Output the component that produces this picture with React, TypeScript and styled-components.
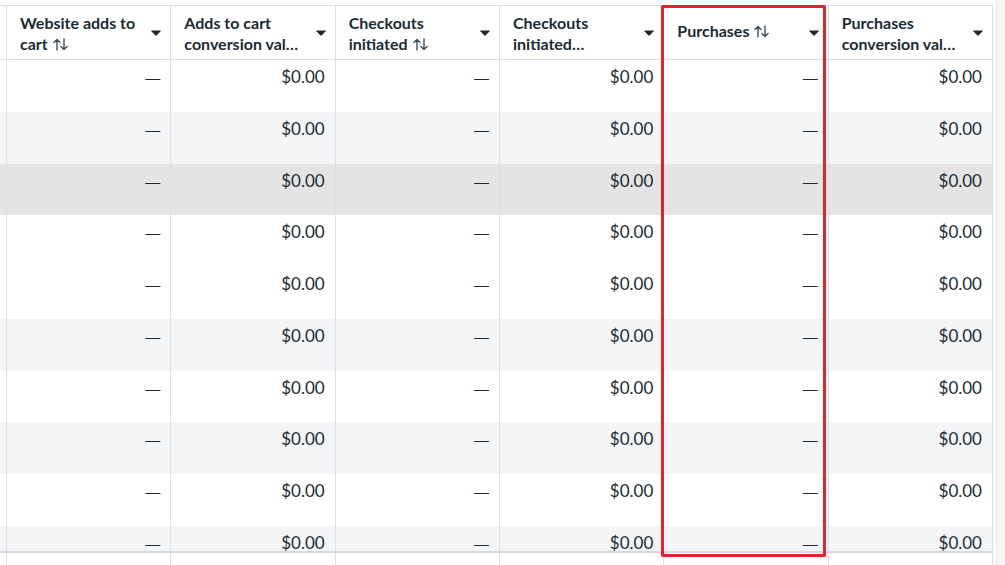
import React from "react";
import styled, { createGlobalStyle } from "styled-components";

const GlobalStyle = createGlobalStyle`
  html, body { margin: 0; padding: 0; background: #ffffff; }
  body { font-family: Lato, "Noto Sans", "Liberation Sans", sans-serif; color: #1c2b33; }
  * { box-sizing: border-box; }
`;

const COLS = "7px repeat(6, 164.33px)";
const LINE = "#dcdfe3";
const TEXT = "#1c2b33";

const Page = styled.div`
  position: relative;
  width: 1005px;
  height: 565px;
  overflow: hidden;
  display: flex;
  background: #fff;
`;

const Table = styled.div`
  display: flex;
  flex-direction: column;
  width: 993px;
  padding-top: 5px;
`;

const HeaderRow = styled.div`
  flex: none;
  display: grid;
  grid-template-columns: ${COLS};
  height: 55px;
  border-top: 1px solid ${LINE};
  border-bottom: 1px solid ${LINE};
`;

const EdgeCell = styled.div`
  border-right: 1px solid ${LINE};
`;

const HeaderCell = styled.div`
  display: flex;
  align-items: center;
  justify-content: space-between;
  padding: 0 9px 0 13px;
  border-right: 1px solid ${LINE};
  min-width: 0;
`;

const Label = styled.div<{ $single?: boolean }>`
  flex: 1;
  min-width: 0;
  display: flex;
  flex-direction: column;
  font-weight: 700;
  font-size: 16px;
  line-height: 21px;
  color: ${TEXT};
  margin-top: ${(p) => (p.$single ? "-5px" : "0px")};
`;

const LabelLine = styled.span`
  white-space: nowrap;
  overflow: hidden;
  text-overflow: ellipsis;
`;

const SortIcon = styled.svg`
  display: inline-block;
  width: 15px;
  height: 13px;
  margin-left: 5px;
  vertical-align: -1px;
`;

const Caret = styled.svg`
  flex: none;
  width: 10px;
  height: 6px;
  margin-left: 8px;
`;

const Body = styled.div`
  flex: none;
  height: 491px;
  overflow: hidden;
`;

const Row = styled.div<{ $tone: "plain" | "stripe" | "hover" }>`
  display: grid;
  grid-template-columns: ${COLS};
  height: 51.75px;
  background: ${(p) =>
    p.$tone === "hover" ? "#e4e4e4" : p.$tone === "stripe" ? "#f4f5f7" : "#ffffff"};
`;

const Cell = styled.div`
  border-right: 1px solid ${LINE};
  text-align: right;
  padding: 7px 10px 0 0;
  font-size: 17px;
  line-height: 20px;
  color: ${TEXT};
  white-space: nowrap;
  overflow: hidden;
`;

const Dash = styled.span`
  font-family: "Liberation Sans", Arial, sans-serif;
  font-size: 15px;
`;

const Footer = styled.div`
  flex: 1;
  display: grid;
  grid-template-columns: ${COLS};
  border-top: 2px solid #d6d8db;
`;

const ScrollTrack = styled.div`
  margin-left: 3px;
  width: 9px;
  height: 100%;
  background-color: #f6f6f6;
  background-image: radial-gradient(#e2e2e2 0.6px, transparent 0.7px);
  background-size: 2px 2px;
  border-left: 1px solid #ececec;
`;

const Highlight = styled.div`
  position: absolute;
  left: 661px;
  top: 5px;
  width: 165px;
  height: 552px;
  border: 3px solid #e4222b;
  border-radius: 2px;
  pointer-events: none;
`;

const Sort = () => (
  <SortIcon viewBox="0 0 15 13" fill="none" stroke="#3d4c57" strokeWidth="1.4" strokeLinecap="round" strokeLinejoin="round">
    <path d="M4 12V1.5M1 4.5L4 1.5L7 4.5" />
    <path d="M11 1V11.5M8 8.5L11 11.5L14 8.5" />
  </SortIcon>
);

const DropCaret = () => (
  <Caret viewBox="0 0 10 6">
    <path d="M0.6 0.4H9.4C9.9 0.4 10.1 1 9.7 1.3L5.5 5.4C5.2 5.7 4.8 5.7 4.5 5.4L0.3 1.3C-0.1 1 0.1 0.4 0.6 0.4Z" fill={TEXT} />
  </Caret>
);

type Col = { title: string; lines: string[]; sort?: boolean; kind: "dash" | "money" };

const columns: Col[] = [
  { title: "Website adds to cart", lines: ["Website adds to", "cart"], sort: true, kind: "dash" },
  { title: "Adds to cart conversion value", lines: ["Adds to cart", "conversion val…"], kind: "money" },
  { title: "Checkouts initiated", lines: ["Checkouts", "initiated"], sort: true, kind: "dash" },
  { title: "Checkouts initiated conversion value", lines: ["Checkouts", "initiated…"], kind: "money" },
  { title: "Purchases", lines: ["Purchases"], sort: true, kind: "dash" },
  { title: "Purchases conversion value", lines: ["Purchases", "conversion val…"], kind: "money" },
];

const tones: ("plain" | "stripe" | "hover")[] = [
  "plain", "stripe", "hover", "plain", "plain", "stripe", "plain", "stripe", "plain", "stripe",
];

export default function App() {
  return (
    <>
      <GlobalStyle />
      <Page>
        <Table>
          <HeaderRow>
            <EdgeCell />
            {columns.map((c) => (
              <HeaderCell key={c.title} title={c.title}>
                <Label $single={c.lines.length === 1}>
                  {c.lines.map((l, i) => (
                    <LabelLine key={i}>
                      {l}
                      {c.sort && i === c.lines.length - 1 && <Sort />}
                    </LabelLine>
                  ))}
                </Label>
                <DropCaret />
              </HeaderCell>
            ))}
          </HeaderRow>
          <Body>
            {tones.map((t, i) => (
              <Row key={i} $tone={t}>
                <EdgeCell />
                {columns.map((c) => (
                  <Cell key={c.title}>{c.kind === "dash" ? <Dash>—</Dash> : "$0.00"}</Cell>
                ))}
              </Row>
            ))}
          </Body>
          <Footer>
            <EdgeCell />
            {columns.map((c) => (
              <EdgeCell key={c.title} />
            ))}
          </Footer>
        </Table>
        <ScrollTrack />
        <Highlight />
      </Page>
    </>
  );
}
